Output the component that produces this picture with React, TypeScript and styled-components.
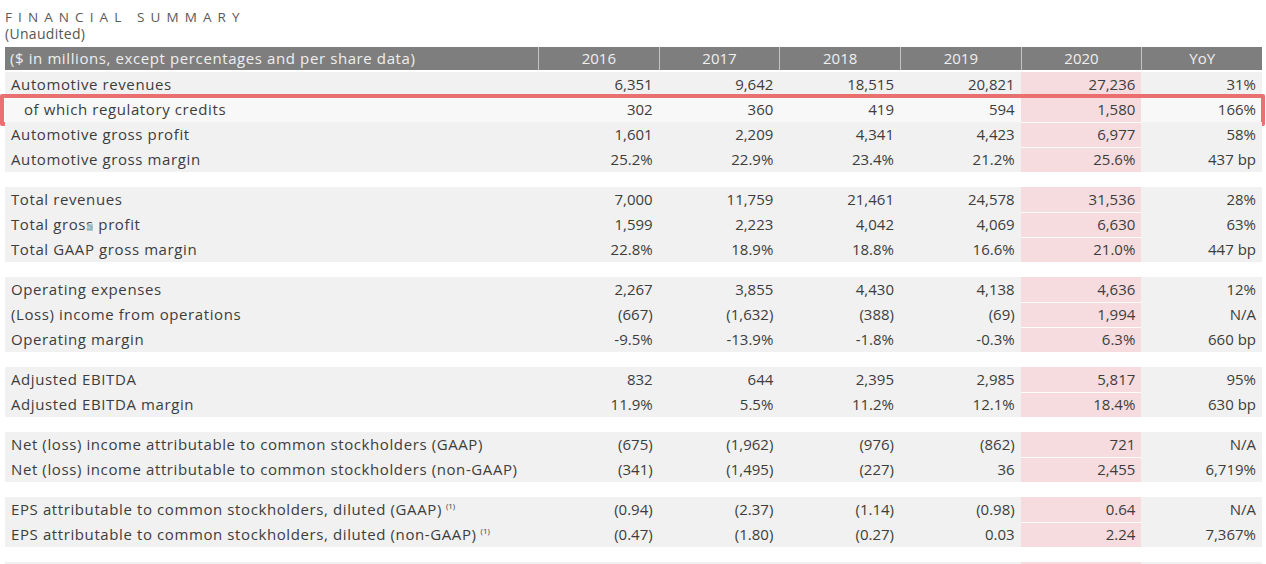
import * as React from 'react';
import styled, { createGlobalStyle, css } from 'styled-components';

const GlobalStyle = createGlobalStyle`
  html, body {
    margin: 0;
    padding: 0;
    background: #ffffff;
    overflow: hidden;
  }
  body {
    font-family: 'Open Sans', 'Liberation Sans', sans-serif;
    color: #3d3d3d;
  }
`;

const Page = styled.div`
  width: 1266px;
  height: 564px;
  padding: 9px 4px 0 5px;
  box-sizing: border-box;
  overflow: hidden;
`;

const Title = styled.div`
  font-size: 13.5px;
  line-height: 16px;
  letter-spacing: 6.1px;
  color: #5a5a5a;
`;

const Subtitle = styled.div`
  font-size: 14px;
  line-height: 18px;
  letter-spacing: 0.3px;
  color: #555555;
  margin-bottom: 4px;
`;

const Grid = css`
  display: grid;
  grid-template-columns: 533px repeat(6, 1fr);
`;

const HeaderRow = styled.div`
  ${Grid};
  height: 23px;
  background: #7e7e7e;
  color: #efefef;
  font-size: 15px;
  line-height: 23px;
  margin-bottom: 2px;
`;

const HeaderCell = styled.div<{ $first?: boolean }>`
  text-align: ${p => (p.$first ? 'left' : 'center')};
  padding-left: ${p => (p.$first ? '5px' : '0')};
  letter-spacing: ${p => (p.$first ? '0.6px' : '0')};
  border-left: ${p => (p.$first ? 'none' : '1px solid rgba(255,255,255,0.55)')};
  white-space: nowrap;
`;

const Group = styled.div`
  margin-bottom: 15px;
`;

const Row = styled.div<{ $highlight?: boolean }>`
  ${Grid};
  position: relative;
  height: 25px;
  line-height: 25px;
  font-size: 15px;
  background: ${p => (p.$highlight ? '#f8f8f8' : '#f1f1f1')};
  ${p =>
    p.$highlight &&
    css`
      &::after {
        content: '';
        position: absolute;
        left: -5px;
        right: -3px;
        top: -3px;
        bottom: -4px;
        border: 4px solid rgba(233, 96, 98, 0.9);
        border-radius: 2px;
        pointer-events: none;
      }
    `}
`;

const Label = styled.div<{ $indent?: boolean }>`
  padding-left: ${p => (p.$indent ? '19px' : '6px')};
  letter-spacing: 0.6px;
  white-space: nowrap;
`;

const Value = styled.div<{ $current?: boolean; $top?: boolean }>`
  text-align: right;
  padding-right: 6px;
  white-space: nowrap;
  ${p =>
    p.$current &&
    css`
      background: #f7dcdf;
      box-shadow: ${p.$top ? 'none' : 'inset 0 1px 0 rgba(255,255,255,0.9)'};
    `}
`;

const Note = styled.sup`
  font-size: 8px;
  line-height: 0;
  letter-spacing: 0;
  vertical-align: 6px;
  margin-left: 4px;
`;

const Cursor = styled.span`
  display: inline-block;
  width: 6px;
  height: 7px;
  background: #9cc3cf;
  margin: 0 -6px 0 0;
  vertical-align: -1px;
  position: relative;
  left: -7px;
  opacity: 0.8;
`;

interface Line {
  label: React.ReactNode;
  values: string[];
  indent?: boolean;
  highlight?: boolean;
}

const years = ['2016', '2017', '2018', '2019', '2020', 'YoY'];

const groups: Line[][] = [
  [
    { label: 'Automotive revenues', values: ['6,351', '9,642', '18,515', '20,821', '27,236', '31%'] },
    {
      label: 'of which regulatory credits',
      values: ['302', '360', '419', '594', '1,580', '166%'],
      indent: true,
      highlight: true,
    },
    { label: 'Automotive gross profit', values: ['1,601', '2,209', '4,341', '4,423', '6,977', '58%'] },
    { label: 'Automotive gross margin', values: ['25.2%', '22.9%', '23.4%', '21.2%', '25.6%', '437 bp'] },
  ],
  [
    { label: 'Total revenues', values: ['7,000', '11,759', '21,461', '24,578', '31,536', '28%'] },
    {
      label: (
        <>
          Total gross<Cursor /> profit
        </>
      ),
      values: ['1,599', '2,223', '4,042', '4,069', '6,630', '63%'],
    },
    { label: 'Total GAAP gross margin', values: ['22.8%', '18.9%', '18.8%', '16.6%', '21.0%', '447 bp'] },
  ],
  [
    { label: 'Operating expenses', values: ['2,267', '3,855', '4,430', '4,138', '4,636', '12%'] },
    { label: '(Loss) income from operations', values: ['(667)', '(1,632)', '(388)', '(69)', '1,994', 'N/A'] },
    { label: 'Operating margin', values: ['-9.5%', '-13.9%', '-1.8%', '-0.3%', '6.3%', '660 bp'] },
  ],
  [
    { label: 'Adjusted EBITDA', values: ['832', '644', '2,395', '2,985', '5,817', '95%'] },
    { label: 'Adjusted EBITDA margin', values: ['11.9%', '5.5%', '11.2%', '12.1%', '18.4%', '630 bp'] },
  ],
  [
    {
      label: 'Net (loss) income attributable to common stockholders (GAAP)',
      values: ['(675)', '(1,962)', '(976)', '(862)', '721', 'N/A'],
    },
    {
      label: 'Net (loss) income attributable to common stockholders (non-GAAP)',
      values: ['(341)', '(1,495)', '(227)', '36', '2,455', '6,719%'],
    },
  ],
  [
    {
      label: (
        <>
          EPS attributable to common stockholders, diluted (GAAP)<Note>(1)</Note>
        </>
      ),
      values: ['(0.94)', '(2.37)', '(1.14)', '(0.98)', '0.64', 'N/A'],
    },
    {
      label: (
        <>
          EPS attributable to common stockholders, diluted (non-GAAP)<Note>(1)</Note>
        </>
      ),
      values: ['(0.47)', '(1.80)', '(0.27)', '0.03', '2.24', '7,367%'],
    },
  ],
  [{ label: '', values: ['', '', '', '', '', ''] }],
];

const App: React.FC = () => {
  return (
    <>
      <GlobalStyle />
      <Page>
        <Title>FINANCIAL SUMMARY</Title>
        <Subtitle>(Unaudited)</Subtitle>
        <HeaderRow>
          <HeaderCell $first>($ in millions, except percentages and per share data)</HeaderCell>
          {years.map(y => (
            <HeaderCell key={y}>{y}</HeaderCell>
          ))}
        </HeaderRow>
        {groups.map((lines, g) => (
          <Group key={g}>
            {lines.map((line, i) => (
              <Row key={i} $highlight={line.highlight}>
                <Label $indent={line.indent}>{line.label}</Label>
                {line.values.map((v, c) => (
                  <Value key={c} $current={c === 4} $top={i === 0}>
                    {v}
                  </Value>
                ))}
              </Row>
            ))}
          </Group>
        ))}
      </Page>
    </>
  );
};

export default App;
